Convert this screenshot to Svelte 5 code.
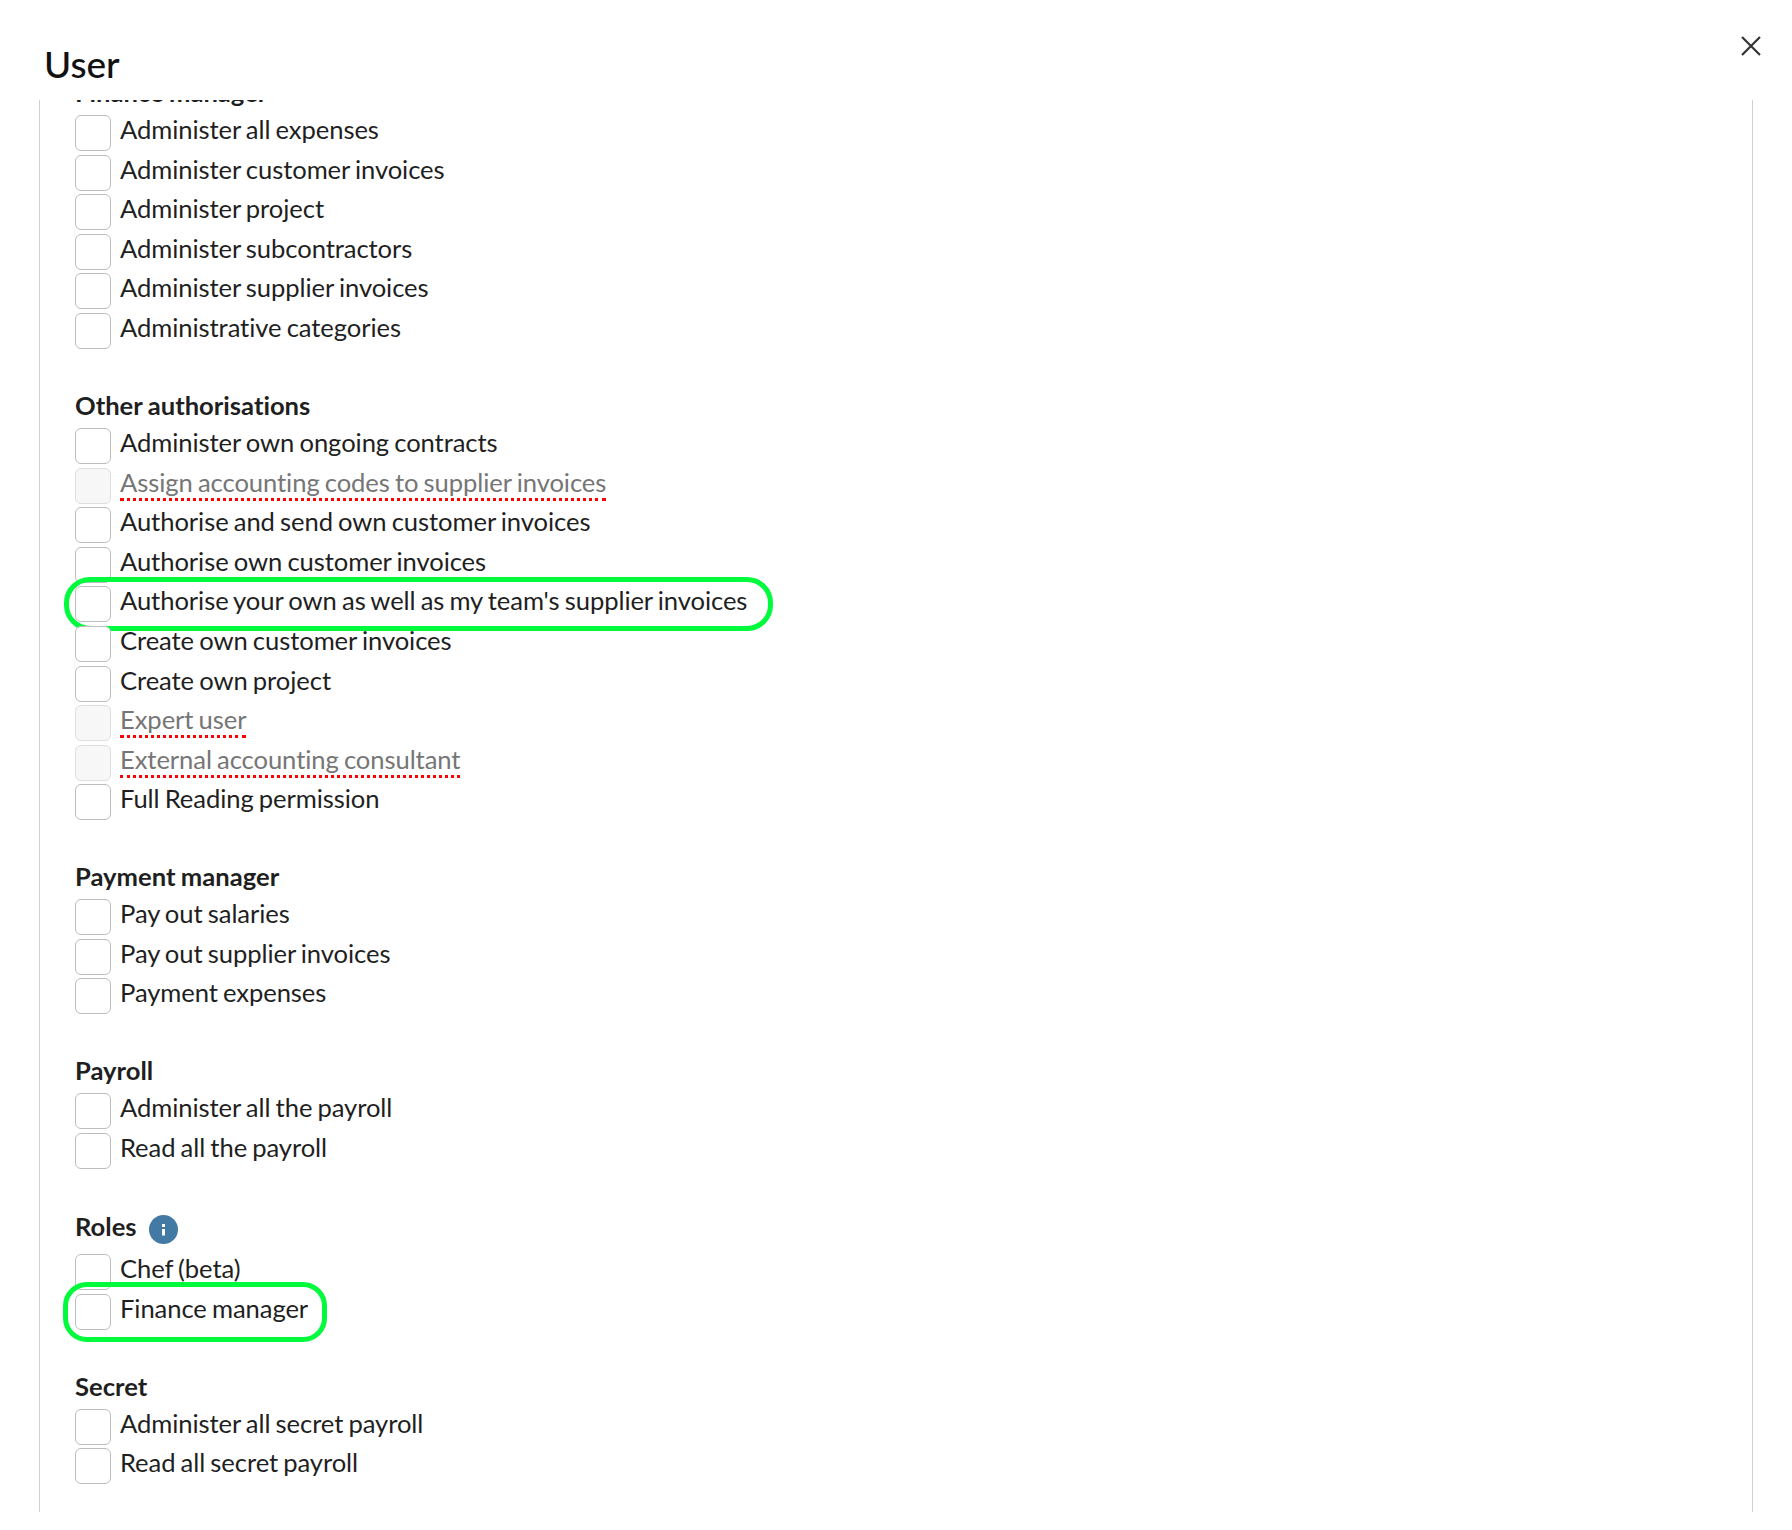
<script>
  const sections = [
    { title: 'Finance manager', rows: [
      { t: 'Administer all expenses' }, { t: 'Administer customer invoices' }, { t: 'Administer project' },
      { t: 'Administer subcontractors' }, { t: 'Administer supplier invoices' }, { t: 'Administrative categories' } ] },
    { title: 'Other authorisations', rows: [
      { t: 'Administer own ongoing contracts' }, { t: 'Assign accounting codes to supplier invoices', off: true },
      { t: 'Authorise and send own customer invoices' }, { t: 'Authorise own customer invoices' },
      { t: "Authorise your own as well as my team's supplier invoices", hl: 'wide' },
      { t: 'Create own customer invoices' }, { t: 'Create own project' }, { t: 'Expert user', off: true },
      { t: 'External accounting consultant', off: true }, { t: 'Full Reading permission' } ] },
    { title: 'Payment manager', rows: [ { t: 'Pay out salaries' }, { t: 'Pay out supplier invoices' }, { t: 'Payment expenses' } ] },
    { title: 'Payroll', rows: [ { t: 'Administer all the payroll' }, { t: 'Read all the payroll' } ] },
    { title: 'Roles', info: true, rows: [ { t: 'Chef (beta)' }, { t: 'Finance manager', hl: 'narrow' } ] },
    { title: 'Secret', rows: [ { t: 'Administer all secret payroll' }, { t: 'Read all secret payroll' } ] }
  ];
</script>

<div class="modal">
  <header class="head">
    <h1>User</h1>
    <button class="close" aria-label="Close">
      <svg viewBox="0 0 20 20" width="20" height="20"><path d="M1 1 19 19M19 1 1 19" fill="none" stroke="#333" stroke-width="2.2" /></svg>
    </button>
  </header>
  <div class="body">
    <div class="inner">
      {#each sections as s}
        <section>
          <h2 class:withinfo={s.info}>
            {s.title}
            {#if s.info}
              <svg class="info" viewBox="0 0 29 29" width="29" height="29">
                <circle cx="14.5" cy="14.5" r="14.5" fill="#437aa3" />
                <rect x="13" y="9" width="3" height="3" fill="#fff" />
                <rect x="13" y="14" width="3" height="6.5" fill="#fff" />
              </svg>
            {/if}
          </h2>
          {#each s.rows as r}
            <div class="row {r.hl ?? ''}" class:off={r.off}>
              <span class="box"></span>
              <span class="label">{r.t}</span>
            </div>
          {/each}
        </section>
      {/each}
    </div>
  </div>
</div>

<style>
  :global(body) { margin: 0; background: #fff; }
  .modal {
    height: 1512px;
    display: flex;
    flex-direction: column;
    font-family: Lato, "Noto Sans", sans-serif;
    font-variant-ligatures: none;
    color: #1f1f1f;
    background: #fff;
  }
  .head {
    height: 100px;
    flex: none;
    position: relative;
    box-sizing: border-box;
    padding: 43px 0 0 44px;
  }
  h1 { margin: 0; font-size: 37px; font-weight: 500; line-height: 42px; color: #111; }
  .close {
    position: absolute;
    top: 36px;
    left: 1741px;
    padding: 0;
    border: 0;
    background: none;
    width: 20px;
    height: 20px;
    display: block;
  }
  .close svg { display: block; }
  .body {
    flex: 1;
    min-height: 0;
    overflow: hidden;
    margin: 0 39px 0 39px;
    border-left: 1px solid #d0d0d0;
    border-right: 1px solid #d0d0d0;
  }
  .inner { padding: 0 0 0 35px; margin-top: -26px; }
  section { margin-bottom: 34.4px; }
  h2 {
    margin: 0;
    height: 41px;
    line-height: 37px;
    font-size: 25.6px;
    font-weight: 700;
    word-spacing: -0.8px;
    display: flex;
    align-items: flex-start;
    color: #1f1f1f;
  }
  h2.withinfo { height: 47px; line-height: 39px; }
  .info { margin-left: 12px; margin-top: 7.5px; }
  .row {
    height: 39.6px;
    display: flex;
    align-items: flex-start;
    position: relative;
    font-size: 25.6px;
    line-height: 29px;
    letter-spacing: -0.08px;
    word-spacing: -1.3px;
  }
  .box {
    flex: none;
    width: 34px;
    height: 34px;
    background: #fff;
    border: 1px solid #bdbdbd;
    border-radius: 6px;
    margin-right: 9px;
  }
  .label { white-space: nowrap; }
  .off .box { background: #f7f7f7; border-color: #dedede; }
  .off .label { color: #767676; padding-bottom: 1px; border-bottom: 3px dotted #f00; }
  .wide::after, .narrow::after {
    content: "";
    position: absolute;
    box-sizing: border-box;
    border: 5px solid #00fa3c;
    pointer-events: none;
  }
  .wide::after { left: -11px; top: -9px; width: 709px; height: 54px; border-radius: 26px; }
  .narrow::after { left: -12px; top: -12px; width: 264px; height: 60px; border-radius: 24px; }
</style>
